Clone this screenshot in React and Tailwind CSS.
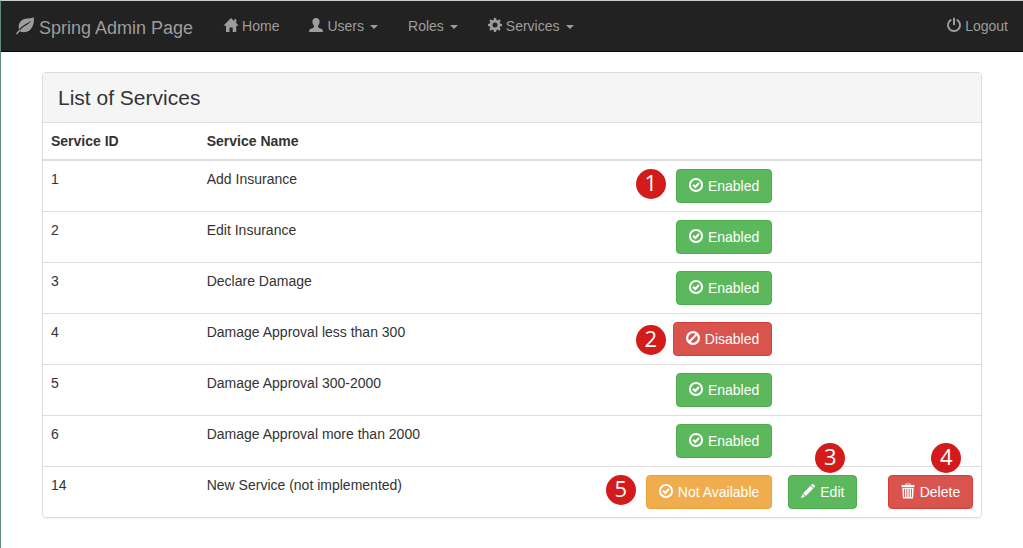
import React from "react";

function Glyph({ className = "size-3.5 mb-0.5", children }) {
  return (
    <svg viewBox="0 0 14 14" fill="currentColor" aria-hidden="true" className={`${className} shrink-0 overflow-visible`}>
      {children}
    </svg>
  );
}

const Leaf = () => (
  <Glyph className="size-[18px]">
    <path d="M13.900.2C12 1.200 9.500.9 7.300 1.300 4 2 2 4.600 2.100 7.600 2.100 8.500 2.200 9.200 2.500 9.900L.3 12.400Q-.1 13.100.4 13.500.8 13.800 1.200 13.200L3 11C5.300 12.500 9.200 12 11.300 9.700 13.600 7.100 14.300 3.500 13.900.2Z" />
    <path
      d="M3 10.300C4.600 8.500 6.300 7.300 8.300 6.200 9.900 5.300 11 4.300 11.800 3 10.600 4 9.500 4.500 8 5.200 5.800 6.300 4 7.700 2.500 9.700Z"
      fill="#222"
    />
  </Glyph>
);
const Home = () => (
  <Glyph>
    <path d="M7 0 10.200 3.200V1.200H12.300V5.200L14.300 7.200Q14.500 7.600 14.100 7.700H12.200V13.700Q12.200 14 11.900 14H8.700V9.500H5.500V14H2.300Q2 14 2 13.700V7.700H0Q-.4 7.600-.2 7.200Z" />
  </Glyph>
);
const User = () => (
  <Glyph>
    <path d="M7 0C9.300 0 10.600 1.300 10.600 3.400 10.600 5.300 10 6.600 9.100 7.500V8.900C9.600 9.900 11.300 10.200 12.700 11 13.700 11.600 14 12.500 14 14H0C0 12.500.3 11.600 1.300 11 2.700 10.200 4.400 9.900 4.900 8.900V7.500C4 6.600 3.400 5.300 3.400 3.400 3.400 1.300 4.700 0 7 0Z" />
  </Glyph>
);
const Cog = () => (
  <Glyph>
    <path
      fillRule="evenodd"
      d="M5.900 0H8.100L8.400 1.900 9.700 2.400 11.200 1.300 12.700 2.800 11.600 4.300 12.100 5.600 14 5.900V8.100L12.100 8.400 11.600 9.700 12.700 11.200 11.200 12.700 9.700 11.600 8.400 12.100 8.100 14H5.900L5.600 12.100 4.300 11.600 2.800 12.700 1.300 11.200 2.400 9.700 1.900 8.400 0 8.100V5.900L1.900 5.600 2.400 4.300 1.300 2.800 2.800 1.300 4.300 2.400 5.600 1.900ZM7 4.500A2.500 2.500 0 1 0 7 9.500 2.500 2.500 0 1 0 7 4.500Z"
    />
  </Glyph>
);
const Power = () => (
  <Glyph>
    <path d="M4.300 1.700A6 6 0 1 0 9.700 1.700" fill="none" stroke="currentColor" strokeWidth="1.900" />
    <rect x="6" y="-.2" width="2" height="7.200" rx=".3" />
  </Glyph>
);
const OkCircle = () => (
  <Glyph>
    <circle cx="7" cy="7" r="6.100" fill="none" stroke="currentColor" strokeWidth="2" />
    <path d="M4 6.700 6.300 8.900 10 5.100" fill="none" stroke="currentColor" strokeWidth="2.200" />
  </Glyph>
);
const Ban = () => (
  <Glyph>
    <circle cx="7" cy="7" r="5.900" fill="none" stroke="currentColor" strokeWidth="2.300" />
    <path d="M3 11 11 3" stroke="currentColor" strokeWidth="2.300" />
  </Glyph>
);
const Pencil = () => (
  <Glyph>
    <path d="M11.200.1Q11.800-.3 12.300.1L13.900 1.700Q14.300 2.300 13.900 2.800L12.800 3.900 10.100 1.200ZM9.500 1.800 12.200 4.500 4.800 11.900 2.100 9.200ZM1.500 9.900 4.100 12.500-.2 14.200Z" />
  </Glyph>
);
const Trash = () => (
  <Glyph>
    <path
      fillRule="evenodd"
      d="M5.100-.6H8.900Q9.500-.6 9.500 0V.9H12.700Q13.500.9 13.500 1.700V3H.5V1.700Q.5.9 1.300.9H4.500V0Q4.500-.6 5.100-.6ZM5.500.3V.9H8.500V.3ZM1.300 3.800H12.700L12.200 13.700Q12.200 14.400 11.500 14.400H2.500Q1.800 14.400 1.800 13.700ZM3.100 4.800V13H4V4.800ZM5.400 4.800V13H6.300V4.800ZM7.700 4.800V13H8.600V4.800ZM10 4.800V13H10.900V4.800Z"
    />
  </Glyph>
);

function NavLink({ icon, label, caret, className = "" }) {
  return (
    <a href="#" className={`flex items-center gap-1 px-[15px] text-sm/5 text-[#9d9d9d] hover:text-white ${className}`}>
      {icon}
      {label}
      {caret && <span className="ml-0.5 mt-0.5 border-x-4 border-t-4 border-x-transparent border-t-current" />}
    </a>
  );
}

const tones = {
  green: "bg-[#5cb85c] border-[#4cae4c]",
  red: "bg-[#d9534f] border-[#d43f3a]",
  orange: "bg-[#f0ad4e] border-[#eea236]",
};

function ActionButton({ tone, icon, children, marker, markerPlace }) {
  return (
    <span className="relative inline-flex align-top">
      <button
        type="button"
        className={`flex items-center gap-[5px] whitespace-nowrap rounded border px-3 py-1.5 text-sm/5 text-white ${tones[tone]}`}
      >
        {icon}
        {children}
      </button>
      {marker && (
        <span
          className={`absolute flex size-[30px] items-center justify-center rounded-full bg-[#d41b1c] pb-1 font-['Open_Sans','Noto_Sans',sans-serif] text-[22px]/[26px] text-white ${markerPlace}`}
        >
          {marker}
        </span>
      )}
    </span>
  );
}

const services = [
  { id: 1, name: "Add Insurance", status: "Enabled", marker: 1, place: "right-full mr-2.5 top-0" },
  { id: 2, name: "Edit Insurance", status: "Enabled" },
  { id: 3, name: "Declare Damage", status: "Enabled" },
  { id: 4, name: "Damage Approval less than 300", status: "Disabled", marker: 2, place: "right-full mr-[7px] top-[3px]" },
  { id: 5, name: "Damage Approval 300-2000", status: "Enabled" },
  { id: 6, name: "Damage Approval more than 2000", status: "Enabled" },
  { id: 14, name: "New Service (not implemented)", status: "Not Available", marker: 5, place: "right-full mr-2.5 top-0", editable: true },
];

const statusStyle = {
  Enabled: { tone: "green", icon: <OkCircle /> },
  Disabled: { tone: "red", icon: <Ban /> },
  "Not Available": { tone: "orange", icon: <OkCircle /> },
};

export default function App() {
  return (
    <div className="min-h-screen border-l border-t border-l-[#5f8880] border-t-[#c8d0cc] bg-white font-['Liberation_Sans',Arial,sans-serif] text-[#333]">
      <nav className="flex h-[51px] border-b border-[#080808] bg-[#222]">
        <a href="#" className="flex items-center gap-[5px] pl-[15px] pr-4 text-lg/5 text-[#9d9d9d]">
          <Leaf />
          <span className="pt-1">Spring Admin Page</span>
        </a>
        <NavLink icon={<Home />} label="Home" />
        <NavLink icon={<User />} label="Users" caret />
        <NavLink label="Roles" caret />
        <NavLink icon={<Cog />} label="Services" caret />
        <NavLink icon={<Power />} label="Logout" className="ml-auto" />
      </nav>

      <main className="mx-auto mt-5 max-w-[970px] px-[15px]">
        <section className="overflow-hidden rounded border border-[#ddd] shadow-[0_1px_1px_rgba(0,0,0,0.05)]">
          <h1 className="border-b border-[#ddd] bg-[#f5f5f5] px-[15px] py-3 text-[21px]/[25px]">List of Services</h1>
          <table className="w-full table-fixed border-collapse">
            <colgroup>
              <col className="w-[16.6%]" />
              <col className="w-[38%]" />
              <col />
              <col className="w-[10.6%]" />
              <col className="w-[10.8%]" />
            </colgroup>
            <thead>
              <tr className="border-b-2 border-[#ddd] text-left text-sm/5">
                <th className="p-2">Service ID</th>
                <th className="p-2" colSpan={4}>Service Name</th>
              </tr>
            </thead>
            <tbody>
              {services.map((s) => (
                <tr key={s.id} className="border-t border-[#ddd] align-top text-sm/5 first:border-t-0">
                  <td className="p-2">{s.id}</td>
                  <td className="p-2">{s.name}</td>
                  <td className="p-2 text-right">
                    <ActionButton {...statusStyle[s.status]} marker={s.marker} markerPlace={s.place}>
                      {s.status}
                    </ActionButton>
                  </td>
                  <td className="p-2">
                    {s.editable && (
                      <ActionButton tone="green" icon={<Pencil />} marker={3} markerPlace="bottom-full mb-0.5 right-3">
                        Edit
                      </ActionButton>
                    )}
                  </td>
                  <td className="p-2 text-right">
                    {s.editable && (
                      <ActionButton tone="red" icon={<Trash />} marker={4} markerPlace="bottom-full mb-0.5 right-3">
                        Delete
                      </ActionButton>
                    )}
                  </td>
                </tr>
              ))}
            </tbody>
          </table>
        </section>
      </main>
    </div>
  );
}
